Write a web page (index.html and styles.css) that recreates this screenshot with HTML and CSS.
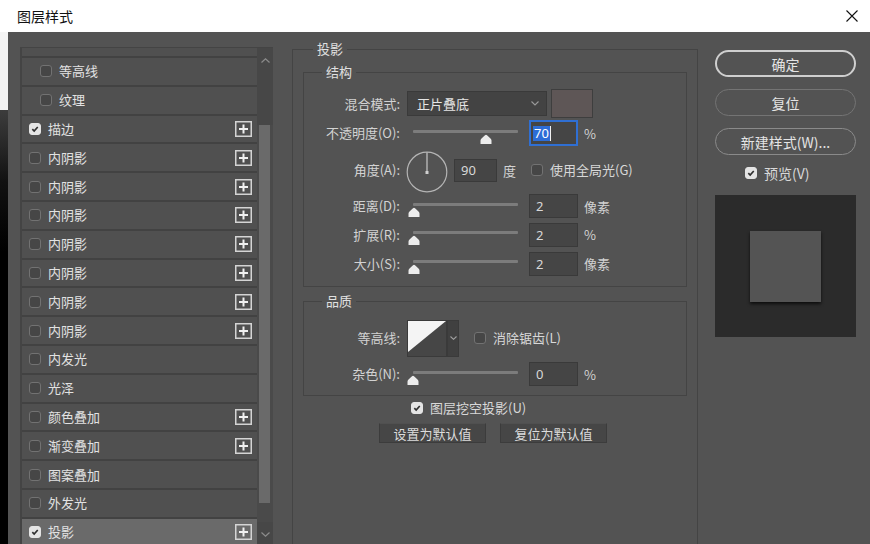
FILE: index.html
```html
<!DOCTYPE html>
<html lang="zh-CN">
<head>
<meta charset="utf-8">
<title>图层样式</title>
<link rel="stylesheet" href="styles.css">
</head>
<body>
<div class="titlebar">
  <span class="title">图层样式</span>
  <svg class="close" width="12" height="12" viewBox="0 0 12 12"><path d="M0.5 0.5L11.5 11.5M11.5 0.5L0.5 11.5" stroke="#111" stroke-width="1.1" fill="none"/></svg>
</div>
<div class="main">
  <div class="backdrop"></div>
  <div class="dialog">
    <div class="layer-list">
      <div class="rows">
        <div class="row partial"></div>
        <div class="row sub"><span class="cb"></span><span class="name">等高线</span></div>
        <div class="row sub"><span class="cb"></span><span class="name">纹理</span></div>
        <div class="row"><span class="cb on"><svg viewBox="0 0 12 12"><path d="M2.8 6.2L5 8.4L9.3 3.6" stroke="#2e2e2e" stroke-width="2" fill="none"/></svg></span><span class="name">描边</span><svg class="plus" width="17" height="16" viewBox="0 0 17 16"><rect x="0.75" y="0.75" width="15.5" height="14.5" fill="none" stroke="#d4d4d4" stroke-width="1.5"/><path d="M8.5 3.5V12.5M4 8H13" stroke="#f0f0f0" stroke-width="2"/></svg></div>
        <div class="row"><span class="cb"></span><span class="name">内阴影</span><svg class="plus" width="17" height="16" viewBox="0 0 17 16"><rect x="0.75" y="0.75" width="15.5" height="14.5" fill="none" stroke="#d4d4d4" stroke-width="1.5"/><path d="M8.5 3.5V12.5M4 8H13" stroke="#f0f0f0" stroke-width="2"/></svg></div>
        <div class="row"><span class="cb"></span><span class="name">内阴影</span><svg class="plus" width="17" height="16" viewBox="0 0 17 16"><rect x="0.75" y="0.75" width="15.5" height="14.5" fill="none" stroke="#d4d4d4" stroke-width="1.5"/><path d="M8.5 3.5V12.5M4 8H13" stroke="#f0f0f0" stroke-width="2"/></svg></div>
        <div class="row"><span class="cb"></span><span class="name">内阴影</span><svg class="plus" width="17" height="16" viewBox="0 0 17 16"><rect x="0.75" y="0.75" width="15.5" height="14.5" fill="none" stroke="#d4d4d4" stroke-width="1.5"/><path d="M8.5 3.5V12.5M4 8H13" stroke="#f0f0f0" stroke-width="2"/></svg></div>
        <div class="row"><span class="cb"></span><span class="name">内阴影</span><svg class="plus" width="17" height="16" viewBox="0 0 17 16"><rect x="0.75" y="0.75" width="15.5" height="14.5" fill="none" stroke="#d4d4d4" stroke-width="1.5"/><path d="M8.5 3.5V12.5M4 8H13" stroke="#f0f0f0" stroke-width="2"/></svg></div>
        <div class="row"><span class="cb"></span><span class="name">内阴影</span><svg class="plus" width="17" height="16" viewBox="0 0 17 16"><rect x="0.75" y="0.75" width="15.5" height="14.5" fill="none" stroke="#d4d4d4" stroke-width="1.5"/><path d="M8.5 3.5V12.5M4 8H13" stroke="#f0f0f0" stroke-width="2"/></svg></div>
        <div class="row"><span class="cb"></span><span class="name">内阴影</span><svg class="plus" width="17" height="16" viewBox="0 0 17 16"><rect x="0.75" y="0.75" width="15.5" height="14.5" fill="none" stroke="#d4d4d4" stroke-width="1.5"/><path d="M8.5 3.5V12.5M4 8H13" stroke="#f0f0f0" stroke-width="2"/></svg></div>
        <div class="row"><span class="cb"></span><span class="name">内阴影</span><svg class="plus" width="17" height="16" viewBox="0 0 17 16"><rect x="0.75" y="0.75" width="15.5" height="14.5" fill="none" stroke="#d4d4d4" stroke-width="1.5"/><path d="M8.5 3.5V12.5M4 8H13" stroke="#f0f0f0" stroke-width="2"/></svg></div>
        <div class="row"><span class="cb"></span><span class="name">内发光</span></div>
        <div class="row"><span class="cb"></span><span class="name">光泽</span></div>
        <div class="row"><span class="cb"></span><span class="name">颜色叠加</span><svg class="plus" width="17" height="16" viewBox="0 0 17 16"><rect x="0.75" y="0.75" width="15.5" height="14.5" fill="none" stroke="#d4d4d4" stroke-width="1.5"/><path d="M8.5 3.5V12.5M4 8H13" stroke="#f0f0f0" stroke-width="2"/></svg></div>
        <div class="row"><span class="cb"></span><span class="name">渐变叠加</span><svg class="plus" width="17" height="16" viewBox="0 0 17 16"><rect x="0.75" y="0.75" width="15.5" height="14.5" fill="none" stroke="#d4d4d4" stroke-width="1.5"/><path d="M8.5 3.5V12.5M4 8H13" stroke="#f0f0f0" stroke-width="2"/></svg></div>
        <div class="row"><span class="cb"></span><span class="name">图案叠加</span></div>
        <div class="row"><span class="cb"></span><span class="name">外发光</span></div>
        <div class="row selected"><span class="cb on"><svg viewBox="0 0 12 12"><path d="M2.8 6.2L5 8.4L9.3 3.6" stroke="#2e2e2e" stroke-width="2" fill="none"/></svg></span><span class="name">投影</span><svg class="plus" width="17" height="16" viewBox="0 0 17 16"><rect x="0.75" y="0.75" width="15.5" height="14.5" fill="none" stroke="#d4d4d4" stroke-width="1.5"/><path d="M8.5 3.5V12.5M4 8H13" stroke="#f0f0f0" stroke-width="2"/></svg></div>
      </div>
      <div class="scrollbar">
        <div class="sb-arrow up"><svg width="9" height="5" viewBox="0 0 9 5"><path d="M0.5 4.5L4.5 0.8L8.5 4.5" stroke="#8c8c8c" stroke-width="1.2" fill="none"/></svg></div>
        <div class="sb-space"></div>
        <div class="sb-thumb"></div>
        <div class="sb-rest"></div>
        <div class="sb-arrow down"><svg width="9" height="5" viewBox="0 0 9 5"><path d="M0.5 0.5L4.5 4.2L8.5 0.5" stroke="#8c8c8c" stroke-width="1.2" fill="none"/></svg></div>
      </div>
    </div>

    <fieldset class="group outer">
      <legend>投影</legend>
      <fieldset class="group inner structure">
        <legend>结构</legend>
        <div class="form-row">
          <span class="label">混合模式:</span>
          <div class="select"><span>正片叠底</span><svg width="8" height="5" viewBox="0 0 8 5"><path d="M0.5 0.5L4 4L7.5 0.5" stroke="#9a9a9a" stroke-width="1.1" fill="none"/></svg></div>
          <span class="swatch"></span>
        </div>
        <div class="form-row">
          <span class="label">不透明度(O):</span>
          <div class="slider"><span class="track"></span><svg class="thumb" style="margin-left:73px" width="12" height="10" viewBox="0 0 12 10"><path d="M0.5 10V6.5Q0.5 5 2 4L5 1.2Q6 0.4 7 1.2L10 4Q11.5 5 11.5 6.5V10Z" fill="#ececec"/></svg></div>
          <span class="num focused"><span class="sel">70</span><span class="caret"></span></span>
          <span class="unit">%</span>
        </div>
        <div class="form-row">
          <span class="label">角度(A):</span>
          <svg class="dial" width="42" height="42" viewBox="0 0 42 42"><circle cx="21" cy="21" r="19.8" fill="none" stroke="#b4b4b4" stroke-width="1.2"/><path d="M21 1.5V21" stroke="#c8c8c8" stroke-width="1.2"/><rect x="19.5" y="20" width="3" height="3" fill="#d0d0d0"/></svg>
          <span class="num short">90</span>
          <span class="unit deg">度</span>
          <span class="cb global"></span>
          <span class="cb-text">使用全局光(G)</span>
        </div>
        <div class="form-row">
          <span class="label">距离(D):</span>
          <div class="slider"><span class="track"></span><svg class="thumb" style="margin-left:1px" width="12" height="10" viewBox="0 0 12 10"><path d="M0.5 10V6.5Q0.5 5 2 4L5 1.2Q6 0.4 7 1.2L10 4Q11.5 5 11.5 6.5V10Z" fill="#ececec"/></svg></div>
          <span class="num">2</span>
          <span class="unit">像素</span>
        </div>
        <div class="form-row">
          <span class="label">扩展(R):</span>
          <div class="slider"><span class="track"></span><svg class="thumb" style="margin-left:1px" width="12" height="10" viewBox="0 0 12 10"><path d="M0.5 10V6.5Q0.5 5 2 4L5 1.2Q6 0.4 7 1.2L10 4Q11.5 5 11.5 6.5V10Z" fill="#ececec"/></svg></div>
          <span class="num">2</span>
          <span class="unit">%</span>
        </div>
        <div class="form-row">
          <span class="label">大小(S):</span>
          <div class="slider"><span class="track"></span><svg class="thumb" style="margin-left:1px" width="12" height="10" viewBox="0 0 12 10"><path d="M0.5 10V6.5Q0.5 5 2 4L5 1.2Q6 0.4 7 1.2L10 4Q11.5 5 11.5 6.5V10Z" fill="#ececec"/></svg></div>
          <span class="num">2</span>
          <span class="unit">像素</span>
        </div>
      </fieldset>

      <fieldset class="group inner quality">
        <legend>品质</legend>
        <div class="form-row">
          <span class="label">等高线:</span>
          <svg class="contour" width="40" height="37" viewBox="0 0 40 37"><rect x="0.5" y="0.5" width="39" height="36" fill="#464646" stroke="#3a3a3a"/><path d="M1 1H39L1 32Z" fill="#f4f4f4"/></svg>
          <div class="contour-drop"><svg width="7" height="4" viewBox="0 0 7 4"><path d="M0.5 0.5L3.5 3.3L6.5 0.5" stroke="#a0a0a0" stroke-width="1.1" fill="none"/></svg></div>
          <span class="cb anti"></span>
          <span class="cb-text">消除锯齿(L)</span>
        </div>
        <div class="form-row">
          <span class="label">杂色(N):</span>
          <div class="slider"><span class="track"></span><svg class="thumb" style="margin-left:0px" width="12" height="10" viewBox="0 0 12 10"><path d="M0.5 10V6.5Q0.5 5 2 4L5 1.2Q6 0.4 7 1.2L10 4Q11.5 5 11.5 6.5V10Z" fill="#ececec"/></svg></div>
          <span class="num">0</span>
          <span class="unit">%</span>
        </div>
      </fieldset>

      <div class="knockout"><span class="cb on"><svg viewBox="0 0 12 12"><path d="M2.8 6.2L5 8.4L9.3 3.6" stroke="#2e2e2e" stroke-width="2" fill="none"/></svg></span><span class="cb-text">图层挖空投影(U)</span></div>
      <div class="defaults">
        <span class="flat-btn">设置为默认值</span>
        <span class="flat-btn">复位为默认值</span>
      </div>
    </fieldset>

    <div class="side">
      <span class="pill primary">确定</span>
      <span class="pill dim">复位</span>
      <span class="pill">新建样式(W)...</span>
      <div class="preview-toggle"><span class="cb on"><svg viewBox="0 0 12 12"><path d="M2.8 6.2L5 8.4L9.3 3.6" stroke="#2e2e2e" stroke-width="2" fill="none"/></svg></span><span class="cb-text">预览(V)</span></div>
      <div class="preview"><span class="preview-square"></span></div>
    </div>
  </div>
</div>
</body>
</html>
```

FILE: styles.css
```css
html, body {
  margin: 0;
  padding: 0;
}
body {
  width: 870px;
  height: 544px;
  overflow: hidden;
  font-family: "Noto Sans CJK SC", "Noto Sans", sans-serif;
  font-size: 13px;
  color: #d6d6d6;
  background: #000;
}

.titlebar {
  height: 32px;
  background: #ffffff;
  display: flex;
  align-items: center;
  padding: 0 12px 0 17px;
  box-sizing: border-box;
}
.title {
  font-size: 14px;
  color: #111;
  line-height: 16px;
}
.close {
  margin-left: auto;
}

.main {
  display: flex;
  height: 512px;
}
.backdrop {
  width: 8px;
  flex: none;
  background: linear-gradient(to bottom, #f4f4f4 0, #f4f4f4 78px, #3c3c3c 78px, #2a2a2a 110px, #111 150px, #000 220px);
}
.dialog {
  flex: 1;
  background: #535353;
  display: flex;
  align-items: flex-start;
  padding: 9px 0 0 12px;
  overflow: hidden;
}

/* layer list */
.layer-list {
  width: 253px;
  height: 500px;
  margin-top: 6px;
  display: flex;
  flex: none;
  border-left: 2px solid #444;
  border-top: 1px solid #444;
  box-sizing: border-box;
  background: #4a4a4a;
}
.rows {
  flex: 1;
  display: flex;
  flex-direction: column;
  overflow: hidden;
}
.row {
  flex: none;
  height: 28.8px;
  box-sizing: border-box;
  border-top: 2px solid #424242;
  background: #505050;
  display: flex;
  align-items: center;
  padding-left: 7px;
  padding-right: 5px;
  color: #e2e2e2;
}
.row.partial {
  height: 8px;
  border-top: none;
}
.row.sub {
  padding-left: 18px;
}
.row.selected {
  background: #6a6a6a;
}
.row .name {
  margin-left: 7px;
  line-height: 16px;
}
.plus {
  margin-left: auto;
  display: block;
}

.cb {
  width: 12px;
  height: 12px;
  flex: none;
  box-sizing: border-box;
  border-radius: 3px;
  border: 1px solid #727272;
  background: #464646;
  display: inline-block;
}
.cb.on {
  background: #e4e4e4;
  border-color: #e4e4e4;
}
.cb svg {
  display: block;
  width: 10px;
  height: 10px;
}

.scrollbar {
  width: 16px;
  flex: none;
  display: flex;
  flex-direction: column;
  background: #4a4a4a;
}
.sb-arrow {
  height: 25px;
  flex: none;
  display: flex;
  align-items: center;
  justify-content: center;
  background: #474747;
}
.sb-space {
  height: 52px;
  background: #474747;
}
.sb-thumb {
  height: 378px;
  width: 11px;
  margin-left: 2px;
  background: #6a6a6a;
}
.sb-rest {
  flex: 1;
}

/* groups */
fieldset.group {
  margin: 0;
  padding: 0;
  min-width: 0;
  border: 1px solid #444444;
  box-sizing: border-box;
}
fieldset.group legend {
  padding: 0 4px;
  line-height: 16px;
  font-size: 13px;
  color: #e0e0e0;
}
.outer {
  width: 406px;
  height: 540px;
  margin-left: 19px !important;
  flex: none;
}
.outer > legend {
  margin-left: 20px;
}
.inner {
  margin: 7px 10px 0 10px !important;
}
.inner > legend {
  margin-left: 18px;
}
.structure {
  display: grid;
  grid-template-rows: 29px 30px 44px 28px 29px 29px;
  padding: 9px 0 8px 0 !important;
}
.quality {
  margin-top: 6px !important;
  display: grid;
  grid-template-rows: 44px 28px;
  padding: 7px 0 7px 0 !important;
}

.form-row {
  display: flex;
  align-items: center;
}
.label {
  width: 96px;
  flex: none;
  text-align: right;
  color: #d2d2d2;
  line-height: 16px;
}

.select {
  margin-left: 7px;
  width: 140px;
  height: 25px;
  box-sizing: border-box;
  background: #434343;
  border: 1px solid #3a3a3a;
  display: flex;
  align-items: center;
  padding: 0 7px 0 9px;
  color: #e6e6e6;
}
.select svg {
  margin-left: auto;
}
.swatch {
  margin-left: 4px;
  width: 42px;
  height: 29px;
  box-sizing: border-box;
  background: #5e5656;
  border: 1px solid #3e3e3e;
}

.slider {
  margin-left: 7px;
  width: 122px;
  flex: none;
  display: flex;
  flex-direction: column;
  margin-top: 7px;
}
.track {
  display: block;
  margin-left: 6px;
  width: 105px;
  height: 3px;
  border-radius: 1px;
  background: #7c7c7c;
}
.thumb {
  display: block;
  margin-top: 1px;
}

.num {
  width: 49px;
  height: 24px;
  flex: none;
  box-sizing: border-box;
  background: #454545;
  border: 1px solid #3a3a3a;
  display: flex;
  align-items: center;
  padding-left: 6px;
  font-family: "Noto Sans", "Noto Sans CJK SC", sans-serif;
  font-size: 13px;
  color: #d8d8d8;
}
.num.short {
  width: 43px;
  height: 23px;
  margin-left: 6px;
}
.num.focused {
  border: 2px solid #2f6fd3;
  padding-left: 2px;
  height: 26px;
}
.num .sel {
  background: #2d6dd6;
  color: #fff;
  line-height: 15px;
  padding: 0 1px;
}
.num .caret {
  width: 1px;
  height: 15px;
  background: #f0f0f0;
}
.unit {
  margin-left: 6px;
  color: #d2d2d2;
}
.unit.deg {
  margin-left: 6px;
}
.dial {
  margin-left: 6px;
  display: block;
  margin-top: 3px;
}
.cb.global {
  margin-left: 15px;
}
.cb-text {
  margin-left: 7px;
  color: #d8d8d8;
  line-height: 16px;
}

.contour {
  margin-left: 7px;
  display: block;
}
.contour-drop {
  width: 12px;
  height: 37px;
  box-sizing: border-box;
  background: #404040;
  border: 1px solid #3a3a3a;
  display: flex;
  align-items: center;
  justify-content: center;
}
.cb.anti {
  margin-left: 15px;
}

.knockout {
  margin-top: 2px;
  height: 20px;
  display: flex;
  align-items: center;
  padding-left: 118px;
}
.defaults {
  margin-top: 5px;
  display: flex;
  justify-content: center;
  gap: 14px;
  padding-right: 4px;
}
.flat-btn {
  width: 107px;
  height: 20px;
  box-sizing: border-box;
  background: #464646;
  border: 1px solid #3c3c3c;
  border-top-color: #505050;
  display: flex;
  align-items: center;
  justify-content: center;
  font-size: 13px;
  color: #dcdcdc;
}

/* side column */
.side {
  width: 141px;
  flex: none;
  margin-left: 17px;
  margin-top: 9px;
  display: flex;
  flex-direction: column;
}
.pill {
  height: 27px;
  box-sizing: border-box;
  border-radius: 14px;
  border: 1.5px solid #8a8a8a;
  display: flex;
  align-items: center;
  justify-content: center;
  font-size: 14px;
  color: #e4e4e4;
  margin-bottom: 12px;
}
.pill.primary {
  border: 2px solid #cfcfcf;
}
.pill.dim {
  border-color: #747474;
}
.preview-toggle {
  margin-top: -4px;
  height: 20px;
  display: flex;
  align-items: center;
  padding-left: 30px;
  font-size: 14px;
}
.preview {
  margin-top: 12px;
  height: 142px;
  background: #2b2b2b;
  display: flex;
  align-items: center;
  justify-content: center;
}
.preview-square {
  width: 71px;
  height: 71px;
  background: #545454;
  box-shadow: 0 2px 3px rgba(0, 0, 0, 0.7);
}
```
